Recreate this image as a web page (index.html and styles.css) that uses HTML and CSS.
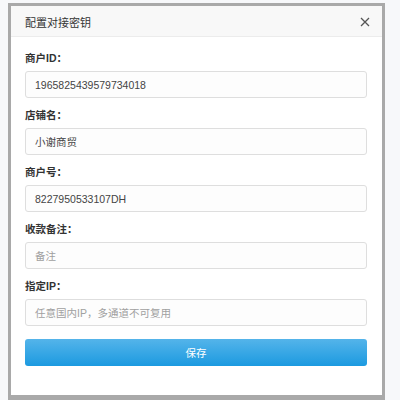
FILE: index.html
```html
<!DOCTYPE html>
<html lang="zh-CN">
<head>
<meta charset="utf-8">
<title>配置对接密钥</title>
<link rel="stylesheet" href="styles.css">
</head>
<body>
<div class="modal">
  <div class="modal-header">
    <span class="modal-title">配置对接密钥</span>
    <span class="close" aria-label="关闭">
      <svg width="10" height="10" viewBox="0 0 10 10"><path d="M1 1L9 9M9 1L1 9" stroke="#555" stroke-width="1.3" fill="none"/></svg>
    </span>
  </div>
  <div class="modal-body">
    <div class="group">
      <div class="label">商户ID：</div>
      <div class="input">1965825439579734018</div>
    </div>
    <div class="group">
      <div class="label">店铺名：</div>
      <div class="input">小谢商贸</div>
    </div>
    <div class="group">
      <div class="label">商户号：</div>
      <div class="input">8227950533107DH</div>
    </div>
    <div class="group">
      <div class="label">收款备注：</div>
      <div class="input placeholder">备注</div>
    </div>
    <div class="group">
      <div class="label">指定IP：</div>
      <div class="input placeholder">任意国内IP，多通道不可复用</div>
    </div>
    <button class="btn">保存</button>
  </div>
</div>
</body>
</html>
```
FILE: styles.css
```css
html, body {
  margin: 0;
  padding: 0;
  background: #f7f8fa;
  height: 400px;
  overflow: hidden;
}
body {
  padding: 3px 0 0 8px;
  font-family: "Liberation Sans", "Noto Sans CJK SC", sans-serif;
  color: #333;
}
.modal {
  width: 371px;
  background: #fff;
  border: 3px solid #a9a9a9;
  border-bottom-width: 8px;
}
.modal-header {
  height: 29px;
  background: #f8f8f8;
  border-bottom: 1px solid #ececec;
  display: flex;
  align-items: center;
  justify-content: space-between;
  padding: 1px 12px 0 14px;
}
.modal-title {
  font-size: 11px;
  color: #333;
}
.close {
  display: flex;
  width: 10px;
  height: 10px;
}
.modal-body {
  padding: 11px 15px 29px 14px;
  display: flex;
  flex-direction: column;
}
.group + .group .label {
  margin-top: 7px;
}
.label {
  font-size: 10.5px;
  font-weight: bold;
  line-height: 20px;
  margin-bottom: 3px;
  color: #333;
}
.input {
  height: 27px;
  box-sizing: border-box;
  border: 1px solid #dedede;
  border-radius: 3px;
  background: #fdfdfd;
  padding: 0 9px;
  display: flex;
  align-items: center;
  font-size: 10.5px;
  color: #444;
}
.input.placeholder {
  color: #a0a0a0;
}
.btn {
  margin-top: 13px;
  height: 27px;
  border: none;
  border-radius: 3px;
  background: linear-gradient(#54b4ea, #1c9ae0);
  color: #fff;
  font-family: inherit;
  font-size: 10.5px;
  padding: 0;
}
```
